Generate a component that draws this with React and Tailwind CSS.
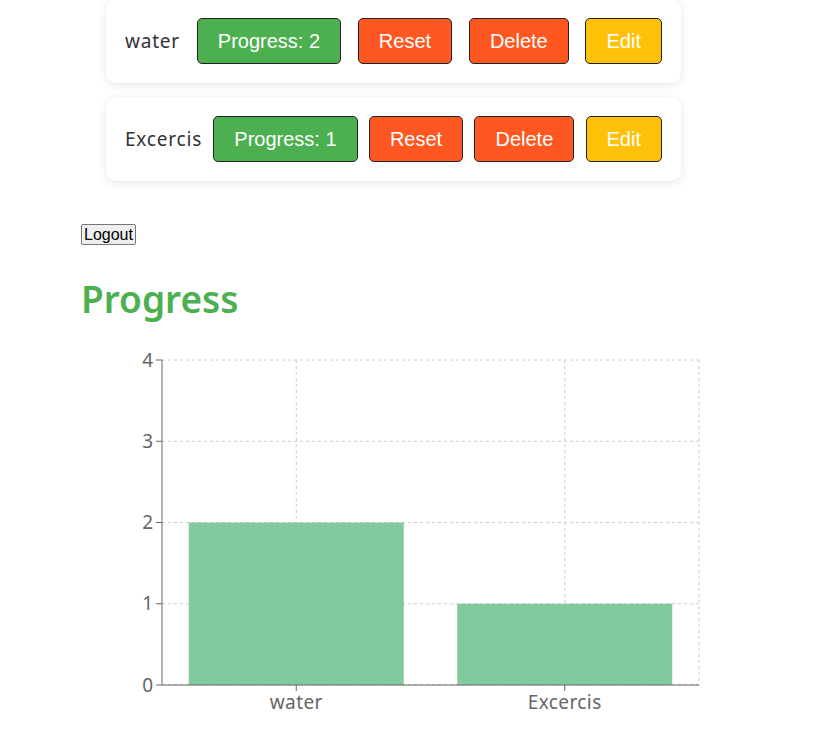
import React from 'react'

const HABITS = [
  { id: 1, name: 'water', progress: 2 },
  { id: 2, name: 'Excercis', progress: 1 }
]

const TICKS = [0, 1, 2, 3, 4]

function HabitCard({ habit }) {
  return (
    <div className="w-[575px] h-[84px] ml-[106px] bg-white rounded-[10px] shadow-[0_2px_10px_rgba(0,0,0,0.1)] px-[19px] flex items-center justify-between">
      <span className="text-[19px] tracking-[0.8px] text-[#333] font-['Noto_Sans',sans-serif]">{habit.name}</span>
      <button className="h-[46px] px-[20px] rounded-[5px] border-[1.5px] border-[#222] bg-[#4CAF50] text-white text-[20px] font-['Liberation_Sans',Arial,sans-serif]">
        Progress: {habit.progress}
      </button>
      <button className="h-[46px] px-[20px] rounded-[5px] border-[1.5px] border-[#222] bg-[#FF5722] text-white text-[20px] font-['Liberation_Sans',Arial,sans-serif]">
        Reset
      </button>
      <button className="h-[46px] px-[20px] rounded-[5px] border-[1.5px] border-[#222] bg-[#FF5722] text-white text-[20px] font-['Liberation_Sans',Arial,sans-serif]">
        Delete
      </button>
      <button className="h-[46px] px-[20px] rounded-[5px] border-[1.5px] border-[#222] bg-[#FFC107] text-white text-[20px] font-['Liberation_Sans',Arial,sans-serif]">
        Edit
      </button>
    </div>
  )
}

function ProgressChart({ data }) {
  // plot area in svg coords
  const left = 81
  const right = 618
  const top = 14
  const bottom = 339
  const max = 4
  const yOf = (v) => bottom - ((bottom - top) * v) / max
  const band = (right - left) / data.length
  const barW = 215

  return (
    <svg width="640" height="380" className="block">
      {/* grid */}
      {TICKS.map((t) => (
        <line key={t} x1={left} x2={right} y1={yOf(t)} y2={yOf(t)} stroke="#ccc" strokeDasharray="3 3" />
      ))}
      {data.map((d, i) => (
        <line key={d.id} x1={left + band * (i + 0.5)} x2={left + band * (i + 0.5)} y1={top} y2={bottom} stroke="#ccc" strokeDasharray="3 3" />
      ))}
      <line x1={right} x2={right} y1={top} y2={bottom} stroke="#ccc" strokeDasharray="3 3" />

      {/* bars */}
      {data.map((d, i) => (
        <rect
          key={d.id}
          x={left + band * (i + 0.5) - barW / 2}
          y={yOf(d.progress)}
          width={barW}
          height={bottom - yOf(d.progress)}
          fill="#82ca9d"
        />
      ))}

      {/* y axis */}
      <line x1={left} x2={left} y1={top} y2={bottom} stroke="#666" />
      {TICKS.map((t) => (
        <g key={t}>
          <line x1={left - 6} x2={left} y1={yOf(t)} y2={yOf(t)} stroke="#666" />
          <text x={left - 9} y={yOf(t)} dy="0.355em" textAnchor="end" fill="#666" fontSize="19" fontFamily="'Noto Sans', sans-serif">
            {t}
          </text>
        </g>
      ))}

      {/* x axis */}
      <line x1={left} x2={right} y1={bottom} y2={bottom} stroke="#666" />
      {data.map((d, i) => (
        <g key={d.id}>
          <line x1={left + band * (i + 0.5)} x2={left + band * (i + 0.5)} y1={bottom} y2={bottom + 6} stroke="#666" />
          <text x={left + band * (i + 0.5)} y={bottom + 24} textAnchor="middle" fill="#666" fontSize="19" letterSpacing="0.4" fontFamily="'Noto Sans', sans-serif">
            {d.name}
          </text>
        </g>
      ))}
    </svg>
  )
}

export default function App() {
  return (
    <div className="w-[839px] h-[739px] bg-white overflow-hidden">
      <div className="mt-[-1px] flex flex-col gap-[14px]">
        {HABITS.map((h) => (
          <HabitCard key={h.id} habit={h} />
        ))}
      </div>

      <div className="pl-[81px] pt-[43px]">
        <button className="block h-[21px] px-[2px] border border-[#767676] bg-[#efefef] rounded-[2px] text-[16px] leading-[18px] text-black font-['Liberation_Sans',Arial,sans-serif]">
          Logout
        </button>
        <h2 className="mt-[31px] text-[37px] leading-[46px] font-semibold text-[#4CAF50] font-['Noto_Sans',sans-serif]">
          Progress
        </h2>
        <div className="mt-[24px]">
          <ProgressChart data={HABITS} />
        </div>
      </div>
    </div>
  )
}
